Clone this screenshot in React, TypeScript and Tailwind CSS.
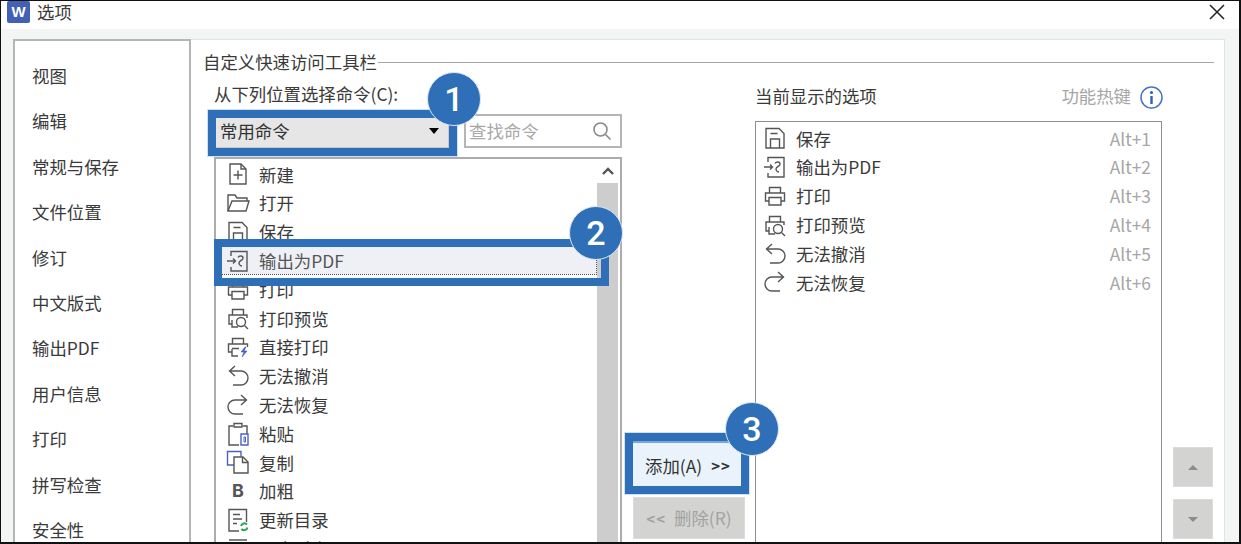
import React from 'react';

const navItems = ['视图', '编辑', '常规与保存', '文件位置', '修订', '中文版式', '输出PDF', '用户信息', '打印', '拼写检查', '安全性'];

const commands = [
  { icon: 'new', label: '新建' },
  { icon: 'open', label: '打开' },
  { icon: 'save', label: '保存' },
  { icon: 'pdf', label: '输出为PDF', selected: true },
  { icon: 'print', label: '打印' },
  { icon: 'preview', label: '打印预览' },
  { icon: 'direct', label: '直接打印' },
  { icon: 'undo', label: '无法撤消' },
  { icon: 'redo', label: '无法恢复' },
  { icon: 'paste', label: '粘贴' },
  { icon: 'copy', label: '复制' },
  { icon: 'bold', label: '加粗' },
  { icon: 'toc', label: '更新目录' },
  { icon: 'center', label: '居中对齐' },
];

const current = [
  { icon: 'save', label: '保存', key: 'Alt+1' },
  { icon: 'pdf', label: '输出为PDF', key: 'Alt+2' },
  { icon: 'print', label: '打印', key: 'Alt+3' },
  { icon: 'preview', label: '打印预览', key: 'Alt+4' },
  { icon: 'undo', label: '无法撤消', key: 'Alt+5' },
  { icon: 'redo', label: '无法恢复', key: 'Alt+6' },
];

function CmdIcon({ name }: { name: string }) {
  const printerTop = 'M6.5 9V3.5h11V9';
  return (
    <svg width="24" height="24" viewBox="0 0 24 24" fill="none" stroke="#555" strokeWidth="1.4" className="shrink-0">
      {name === 'new' && (
        <>
          <path d="M4 2h11l5 5v15H4z" />
          <path d="M15 2v5h5M12 8.5v9M7.5 13h9" />
        </>
      )}
      {name === 'open' && (
        <>
          <path d="M2 20V4h7l2 3h10v3" />
          <path d="M2 20l4-10h17l-3 10z" />
        </>
      )}
      {name === 'save' && (
        <>
          <path d="M3 2.5h13l5 5V22H3z" />
          <path d="M7.5 22v-9h9v9M7.5 7.5h7" />
        </>
      )}
      {name === 'pdf' && (
        <>
          <path d="M5 7V2.5h16V22H5v-4" />
          <path d="M1 12h8M7 9.5l2.5 2.5L7 14.5" />
          <path d="M12 8.5c1-2 5-2 5 .5 0 3-4 2-4 5 0 2 2 3 3 3" />
        </>
      )}
      {name === 'print' && (
        <>
          <path d={printerTop} />
          <path d="M6 17H2.5V9h19v8H18" />
          <path d="M6 13.5h12V21H6z" />
        </>
      )}
      {name === 'preview' && (
        <>
          <path d={printerTop} />
          <path d="M6 18H3V9h18v3" />
          <circle cx="15" cy="16" r="4.5" />
          <path d="M18.5 19.5l3.5 3.5M6 14v7h6" />
        </>
      )}
      {name === 'direct' && (
        <>
          <path d={printerTop} />
          <path d="M6 17H2.5V9h19v3" />
          <path d="M6 13.5h7M6 14v7h6" />
          <path d="M19 12l-4 5h3l-2 5 5-6h-3l2-4z" fill="#4a62c4" stroke="#4a62c4" strokeWidth="0.6" />
        </>
      )}
      {name === 'undo' && <path d="M9 2L3.5 7 9 12M3.5 7H15a6.5 6.5 0 0 1 0 14H7" />}
      {name === 'redo' && <path d="M15 2l5.5 5L15 12M20.5 7H9a6.5 6.5 0 0 0 0 14h8" />}
      {name === 'paste' && (
        <>
          <path d="M7 4H3v19h10M17 4h4v8" />
          <path d="M8 5V1.5h8V5z" />
          <path d="M15 12h7v11h-7z" stroke="#4a62c4" />
          <path d="M18 15h1.5v5H18z" stroke="#4a62c4" strokeWidth="1" />
        </>
      )}
      {name === 'copy' && (
        <>
          <path d="M8 15H1.5V1.5H15v5" stroke="#4a62c4" />
          <path d="M8 7h9l5 5v11H8z" />
          <path d="M16.5 7v5.5H22" />
        </>
      )}
      {name === 'toc' && (
        <>
          <path d="M13 23H3V1.5h17.5V14" />
          <path d="M7 6.5h7M7 11h9M7 15.5h4" />
          <path d="M15 18a3.5 3.5 0 0 1 6-1.5M21.5 19.5a3.5 3.5 0 0 1-6 1.5" stroke="#2e9e5b" strokeWidth="2" />
        </>
      )}
      {name === 'center' && <path d="M3 3h18M7 8h10M3 13h18M7 18h10" />}
    </svg>
  );
}

function Badge({ n, className }: { n: number; className: string }) {
  return (
    <div className={`absolute z-20 flex h-[54px] w-[54px] items-center justify-center rounded-full border border-[#dbe7f3] bg-[#2f6fb8] text-[34px] font-medium leading-none text-white ${className}`}
      style={{ fontFamily: 'Roboto, sans-serif' }}>
      {n}
    </div>
  );
}

function Row({ icon, label, selected, shortcut }: { icon: string; label: string; selected?: boolean; shortcut?: string }) {
  return (
    <div className={`flex h-[28.8px] shrink-0 items-center border border-transparent pl-[5px] ${selected ? 'border-dotted !border-[#555] bg-[#eff0f5] text-[#555]' : ''}`}>
      {icon === 'bold' ? (
        <span className="w-[24px] text-center text-[18px] font-bold leading-none text-[#555]" style={{ fontFamily: 'Inter, sans-serif' }}>B</span>
      ) : (
        <CmdIcon name={icon} />
      )}
      <span className="ml-[9px] flex-1 whitespace-nowrap">{label}</span>
      {shortcut && <span className="pr-[9px] text-[#a6a6a6]">{shortcut}</span>}
    </div>
  );
}

export default function App() {
  return (
    <div
      className="flex h-[544px] w-[1241px] flex-col overflow-hidden border-t border-r-2 border-b-2 border-l border-[#111] bg-white text-[17.4px] leading-none text-[#3a3a3a]"
      style={{ fontFamily: '"Noto Sans CJK SC", "Liberation Sans", sans-serif' }}
    >
      {/* title bar */}
      <div className="flex h-[28px] shrink-0 items-center justify-between pr-[14px] pl-[6px]">
        <div className="flex items-center">
          <div className="-mt-[7px] flex h-[22px] w-[23px] items-center justify-center rounded-[2px] bg-[#4260b4] text-[15px] font-bold text-white" style={{ fontFamily: '"Liberation Sans", sans-serif' }}>W</div>
          <span className="-mt-[7px] ml-[7px]">选项</span>
        </div>
        <svg width="16" height="16" viewBox="0 0 16 16" stroke="#222" strokeWidth="1.5" className="-mt-[7px]">
          <path d="M1 1l14 14M15 1L1 15" />
        </svg>
      </div>

      <div className="flex min-h-0 flex-1 bg-[#f3f5f5] pt-[10px] pr-[14px] pl-[12px]">
        {/* nav */}
        <div className="flex w-[178px] shrink-0 flex-col border-2 border-b-0 border-[#b5b5b5] bg-white pt-[12px] pl-[17px]">
          {navItems.map((item) => (
            <div key={item} className="flex h-[45.4px] shrink-0 items-center whitespace-nowrap">{item}</div>
          ))}
        </div>

        {/* panel */}
        <div className="flex min-w-0 flex-1 flex-col border-t border-r border-[#e2e4e4] bg-white pt-[11px] pl-[12px]">
          <div className="flex h-[22px] shrink-0 items-center pr-[10px]">
            <span className="whitespace-nowrap">自定义快速访问工具栏</span>
            <div className="ml-px h-px flex-1 bg-[#a5a5a5]" />
          </div>

          <div className="flex min-h-0 flex-1 pt-[10px] pl-[11px]">
            {/* left list */}
            <div className="flex w-[408px] shrink-0 flex-col">
              <div className="flex h-[22px] shrink-0 items-center whitespace-nowrap">从下列位置选择命令(C):</div>
              <div className="relative mt-[9px] flex h-[34px] shrink-0 gap-[15px]">
                <div className="flex h-full w-[235px] items-center justify-between border border-[#c8c8c8] bg-[#e6e6e6] pr-[8px] pl-[5px] text-[#333]">
                  <span>常用命令</span>
                  <span className="mr-px h-0 w-0 border-x-[5px] border-t-[6px] border-x-transparent border-t-black" />
                </div>
                <div className="flex h-full flex-1 items-center justify-between border-2 border-[#b5b5b5] pr-[8px] pl-[3px] text-[#a8a8a8]">
                  <span>查找命令</span>
                  <svg width="20" height="20" viewBox="0 0 20 20" fill="none" stroke="#8a8a8a" strokeWidth="1.6">
                    <circle cx="8.5" cy="8.5" r="6.5" />
                    <path d="M13.5 13.5l5 5" />
                  </svg>
                </div>
                <div className="absolute -top-[4px] -left-[6px] h-[46px] w-[249px] border-8 border-[#2f6fb8] outline outline-1 outline-[#cfe0f1]" />
                <Badge n={1} className="-top-[42px] left-[213px]" />
              </div>

              <div className="relative mt-[9px] flex min-h-0 flex-1 border-2 border-b-0 border-[#acacac]">
                <div className="min-h-0 flex-1 overflow-hidden pt-px pl-[4px]">
                  {commands.map((c) => (
                    <Row key={c.label} icon={c.icon} label={c.label} selected={c.selected} />
                  ))}
                </div>
                <div className="flex w-[21px] shrink-0 flex-col mr-[2px]">
                  <div className="flex h-[24px] shrink-0 items-center justify-center bg-white">
                    <svg width="12" height="8" viewBox="0 0 12 8" fill="none" stroke="#555" strokeWidth="2.4">
                      <path d="M1 7l5-5 5 5" />
                    </svg>
                  </div>
                  <div className="flex-1 bg-[#cdcdcd]" />
                </div>
                <div className="absolute top-[80px] -left-[2px] z-10 h-[47px] w-[395px] border-8 border-[#2f6fb8]" />
                <Badge n={2} className="top-[47px] left-[353px]" />
              </div>
            </div>

            {/* add / remove */}
            <div className="flex w-[133px] shrink-0 flex-col justify-end gap-[11px] pb-[3px] pl-[11px]">
              <div className="relative h-[45px] w-[110px]">
                <div className="flex h-full items-center justify-center gap-[9px] border-t-2 border-[#7aa5d8] bg-[#eaf3fb] pt-[2px]">
                  <span className="text-[#333]">添加(A)</span>
                  <span className="text-[15px] font-bold tracking-[1px] text-[#333]">&gt;&gt;</span>
                </div>
                <div className="absolute -top-[8px] -left-[8px] h-[61px] w-[124px] border-8 border-[#2f6fb8] outline outline-1 outline-[#cfe0f1]" />
                <Badge n={3} className="-top-[39px] left-[92px]" />
              </div>
              <div className="flex h-[42px] w-[112px] items-center justify-center gap-[8px] border border-[#dcdcdc] bg-[#d3d3d1] text-[#a3a3a3]">
                <span className="text-[15px] font-bold tracking-[1px]">&lt;&lt;</span>
                <span>删除(R)</span>
              </div>
            </div>

            {/* right list */}
            <div className="flex w-[407px] shrink-0 flex-col">
              <div className="flex h-[26px] shrink-0 items-center justify-between pr-0">
                <span className="whitespace-nowrap">当前显示的选项</span>
                <div className="flex items-center gap-[9px] pr-[-1px] text-[#a6a6a6]">
                  <span>功能热键</span>
                  <svg width="23" height="23" viewBox="0 0 23 23" fill="none" className="mr-[-1px] mt-[3px]">
                    <circle cx="11.5" cy="11.5" r="10.5" stroke="#4a72c4" strokeWidth="1.5" />
                    <circle cx="11.5" cy="6.5" r="1.6" fill="#2f62b8" />
                    <path d="M11.5 10v8" stroke="#2f62b8" strokeWidth="2.4" />
                  </svg>
                </div>
              </div>
              <div className="mt-[12px] min-h-0 flex-1 overflow-hidden border border-b-0 border-[#8e8e8e] pt-[2px] pl-px">
                {current.map((c) => (
                  <Row key={c.key} icon={c.icon} label={c.label} shortcut={c.key} />
                ))}
              </div>
            </div>

            {/* move up / down */}
            <div className="ml-[11px] flex flex-col justify-end gap-[12px] pb-[3px]">
              <div className="flex h-[40px] w-[40px] items-center justify-center border border-[#dcdcdc] bg-[#d3d3d1]">
                <span className="h-0 w-0 border-x-[5px] border-b-[5px] border-x-transparent border-b-[#8c8c8c]" />
              </div>
              <div className="flex h-[40px] w-[40px] items-center justify-center border border-[#dcdcdc] bg-[#d3d3d1]">
                <span className="h-0 w-0 border-x-[5px] border-t-[5px] border-x-transparent border-t-[#8c8c8c]" />
              </div>
            </div>
          </div>
        </div>
      </div>
    </div>
  );
}
